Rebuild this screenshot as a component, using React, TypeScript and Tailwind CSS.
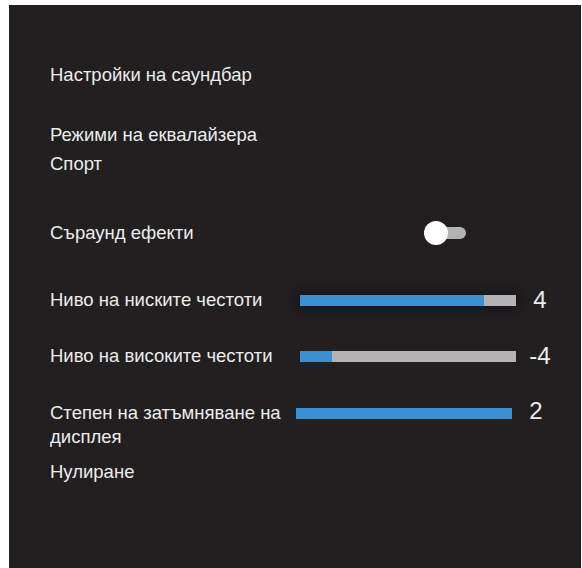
import React from "react";

const font = { fontFamily: '"Liberation Sans", Arial, sans-serif' };

function Bar({ pct, glow }: { pct: number; glow?: boolean }) {
  return (
    <div
      className={
        "w-[216px] h-[11px] bg-[#b3b3b3] flex " +
        (glow ? "shadow-[0_0_8px_3px_rgba(8,12,30,0.55)]" : "")
      }
    >
      <div className="h-full bg-[#3a90d2]" style={{ width: `${pct}%` }} />
    </div>
  );
}

export default function App() {
  return (
    <div className="w-[582px] h-[568px] bg-white flex pl-[9px] pt-[5px] pr-[1px]" style={font}>
      <div className="flex-1 bg-[#221f20] text-[#ececec] text-[18.5px] leading-[24px] pl-[41px] pt-[58px] flex flex-col">
        <div>Настройки на саундбар</div>
        <div className="mt-[36px]">Режими на еквалайзера</div>
        <div className="mt-[5px]">Спорт</div>
        <div className="mt-[45px] flex items-center">
          <div className="w-[374px]">Съраунд ефекти</div>
          <div className="relative w-[42px] h-[24px] flex items-center">
            <div className="absolute left-[10px] w-[32px] h-[12px] rounded-r-full bg-[#b3b3b3]" />
            <div className="absolute left-0 w-[24px] h-[24px] rounded-full bg-white" />
          </div>
        </div>
        <div className="mt-[43px] flex items-center">
          <div className="w-[250px] whitespace-nowrap">Ниво на ниските честоти</div>
          <Bar pct={85} glow />
          <div className="w-[44px] text-center text-[24px] ml-[2px]">4</div>
        </div>
        <div className="mt-[32px] flex items-center">
          <div className="w-[250px] whitespace-nowrap">Ниво на високите честоти</div>
          <Bar pct={15} />
          <div className="w-[44px] text-center text-[24px] ml-[2px]">-4</div>
        </div>
        <div className="mt-[33px] flex items-start">
          <div className="w-[246px]">Степен на затъмняване на дисплея</div>
          <div className="h-[24px] flex items-center">
            <Bar pct={100} />
          </div>
          <div className="w-[44px] text-center text-[24px] ml-[2px] leading-[20px]">2</div>
        </div>
        <div className="mt-[11px]">Нулиране</div>
      </div>
    </div>
  );
}
